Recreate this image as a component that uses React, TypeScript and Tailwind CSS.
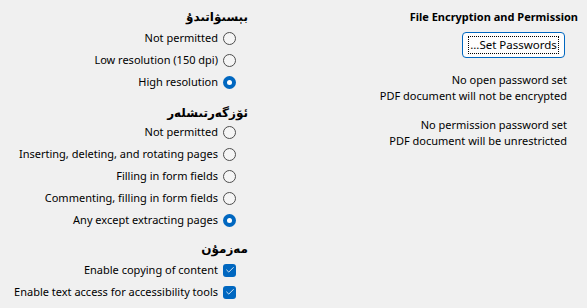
import { Check } from "lucide-react";

const font = { fontFamily: '"Noto Sans", "DejaVu Sans", sans-serif' };

function Radio({ label, checked = false }: { label: string; checked?: boolean }) {
  return (
    <div className="flex h-[22px] items-center justify-end gap-[5px] pr-[12px]">
      <span className="whitespace-nowrap">{label}</span>
      {checked ? (
        <span className="flex h-[13px] w-[13px] shrink-0 items-center justify-center rounded-full bg-[#0067c0]">
          <span className="h-[5px] w-[5px] rounded-full bg-white" />
        </span>
      ) : (
        <span className="h-[13px] w-[13px] shrink-0 rounded-full border border-[#4d4d4d] bg-[#f5f5f5]" />
      )}
    </div>
  );
}

function CheckRow({ label }: { label: string }) {
  return (
    <div className="flex h-[22px] items-center justify-end gap-[5px] pr-[12px]">
      <span className="whitespace-nowrap">{label}</span>
      <span className="flex h-[13px] w-[13px] shrink-0 items-center justify-center rounded-[3px] bg-[#0067c0]">
        <Check className="h-[10px] w-[10px] text-white" strokeWidth={2} />
      </span>
    </div>
  );
}

function Heading({ children }: { children: string }) {
  return (
    <div dir="rtl" className="h-[16px] text-[12px] font-bold leading-[16px]">
      {children}
    </div>
  );
}

export default function App() {
  return (
    <div
      className="flex h-[308px] w-[587px] bg-[#f0f0f0] text-[11px] leading-[16px] text-black"
      style={font}
    >
      {/* Printing / Changes / Content */}
      <div className="flex w-[248px] shrink-0 flex-col items-stretch pt-[9px] text-right">
        <div className="flex justify-end">
          <Heading>بېسىۋاتىدۇ</Heading>
        </div>
        <div className="mt-[2px]">
          <Radio label="Not permitted" />
          <Radio label="Low resolution (150 dpi)" />
          <Radio label="High resolution" checked />
        </div>

        <div className="mt-[12px] flex justify-end">
          <Heading>ئۆزگەرتىشلەر</Heading>
        </div>
        <div>
          <Radio label="Not permitted" />
          <Radio label="Inserting, deleting, and rotating pages" />
          <Radio label="Filling in form fields" />
          <Radio label="Commenting, filling in form fields" />
          <Radio label="Any except extracting pages" checked />
        </div>

        <div className="mt-[10px] flex justify-end">
          <Heading>مەزمۇن</Heading>
        </div>
        <div className="mt-[2px]">
          <CheckRow label="Enable copying of content" />
          <CheckRow label="Enable text access for accessibility tools" />
        </div>
      </div>

      {/* File encryption */}
      <div className="flex flex-1 flex-col items-end pr-[9px] pt-[9px] text-right">
        <div className="h-[16px] whitespace-nowrap font-bold">File Encryption and Permission</div>
        <button className="mr-[13px] mt-[7px] flex h-[26px] w-[103px] items-center justify-center rounded-[4px] border border-[#0067c0] bg-[#fdfdfd]">
          <span className="whitespace-nowrap border border-dotted border-black px-[1px] text-[11.5px] leading-[16px]">
            ...Set Passwords
          </span>
        </button>
        <div className="mr-[11px] mt-[14px] whitespace-nowrap">
          <div>No open password set</div>
          <div>PDF document will not be encrypted</div>
        </div>
        <div className="mr-[11px] mt-[13px] whitespace-nowrap">
          <div>No permission password set</div>
          <div>PDF document will be unrestricted</div>
        </div>
      </div>
    </div>
  );
}
